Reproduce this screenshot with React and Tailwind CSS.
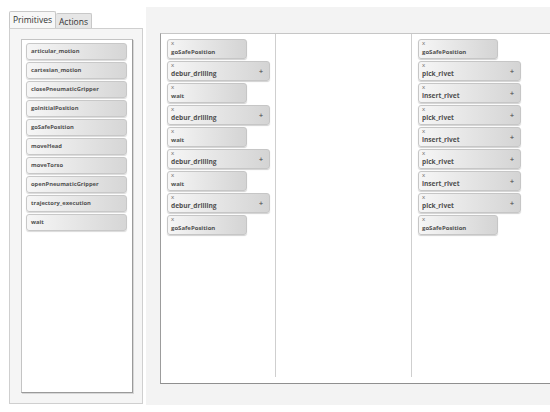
import React from 'react';

const PRIMITIVES = [
  'articular_motion',
  'cartesian_motion',
  'closePneumaticGripper',
  'goInitialPosition',
  'goSafePosition',
  'moveHead',
  'moveTorso',
  'openPneumaticGripper',
  'trajectory_execution',
  'wait',
];

const COL1 = [
  ['goSafePosition', false],
  ['debur_drilling', true],
  ['wait', false],
  ['debur_drilling', true],
  ['wait', false],
  ['debur_drilling', true],
  ['wait', false],
  ['debur_drilling', true],
  ['goSafePosition', false],
];

const COL3 = [
  ['goSafePosition', false],
  ['pick_rivet', true],
  ['insert_rivet', true],
  ['pick_rivet', true],
  ['insert_rivet', true],
  ['pick_rivet', true],
  ['insert_rivet', true],
  ['pick_rivet', true],
  ['goSafePosition', false],
];

function Block({ label, expandable }) {
  return (
    <div
      className={`relative h-[20px] rounded-[3px] border border-[#c6c6c6] bg-linear-to-r from-[#f6f6f6] to-[#d4d4d4] shadow-[0_1px_1px_rgba(0,0,0,0.18)] ${expandable ? 'w-[103px]' : 'w-[80px]'}`}
    >
      <span className="absolute left-[3px] top-[-1px] text-[6px] leading-[8px] text-[#666]">x</span>
      <span
        className={`absolute left-[3px] top-[7px] font-bold text-[#505050] leading-[10px] ${expandable ? 'text-[6.6px]' : 'text-[6px]'}`}
      >
        {label}
      </span>
      {expandable && (
        <span className="absolute right-[6px] top-[5px] text-[7px] leading-[10px] font-bold text-[#666]">+</span>
      )}
    </div>
  );
}

function Column({ items, className }) {
  return (
    <div className={`h-[343px] pl-[6px] pt-[5px] flex flex-col gap-[2px] ${className}`}>
      {items.map(([label, exp], i) => (
        <Block key={i} label={label} expandable={exp} />
      ))}
    </div>
  );
}

export default function App() {
  return (
    <div className="w-[550px] h-[412px] bg-white flex font-['Open_Sans',sans-serif] overflow-hidden">
      {/* left tab widget */}
      <div className="w-[146px] shrink-0 pl-[9px] pt-[11px]">
        <div className="flex h-[17px] items-end">
          <div className="h-[17px] px-[3px] border border-b-0 border-[#c8c8c8] bg-[#f7f7f7] rounded-t-[2px] text-[8.5px] leading-[16px] text-[#333] relative z-10">
            Primitives
          </div>
          <div className="h-[15px] px-[3px] border border-l-0 border-b-0 border-[#c8c8c8] bg-[#e6e6e6] rounded-t-[2px] text-[8.5px] leading-[15px] text-[#333]">
            Actions
          </div>
        </div>
        <div className="w-[134px] h-[376px] border border-[#cfcfcf] bg-[#f5f5f5] pt-[10px] pl-[11px]">
          <div className="w-[112px] h-[354px] bg-white border border-[#c4c4c4] border-r-[#9a9a9a] border-b-[#9a9a9a] shadow-[1px_1px_0_rgba(0,0,0,0.12)] pt-[3px] pl-[4px] flex flex-col gap-[2px]">
            {PRIMITIVES.map((p) => (
              <div
                key={p}
                className="w-[101px] h-[17px] rounded-[3px] border border-[#c8c8c8] bg-linear-to-r from-[#f6f6f6] to-[#d6d6d6] shadow-[0_1px_1px_rgba(0,0,0,0.15)] pl-[4px] text-[5.8px] leading-[15px] font-bold text-[#505050]"
              >
                {p}
              </div>
            ))}
          </div>
        </div>
      </div>

      {/* right canvas */}
      <div className="flex-1 mt-[7px] h-[398px] bg-[#f3f3f3] pl-[14px] pt-[26px]">
        <div className="h-[351px] bg-white border border-r-0 border-[#c6c6c6] border-b-[#8f8f8f] border-l-[#9c9c9c] flex">
          <Column items={COL1} className="w-[115px] border-r border-[#cfcfcf]" />
          <div className="w-[136px] h-[343px] border-r border-[#cfcfcf]" />
          <Column items={COL3} className="flex-1" />
        </div>
      </div>
    </div>
  );
}
